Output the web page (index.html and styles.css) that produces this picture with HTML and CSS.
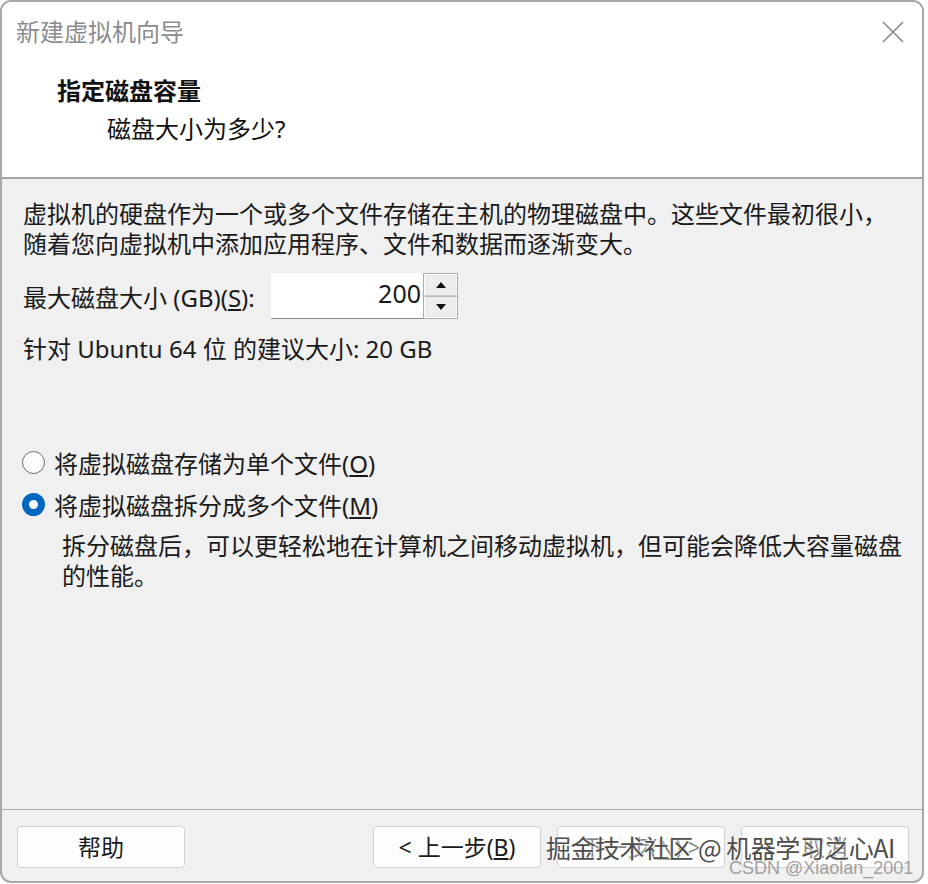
FILE: index.html
```html
<!DOCTYPE html>
<html lang="zh-CN">
<head>
<meta charset="utf-8">
<title>新建虚拟机向导</title>
<link rel="stylesheet" href="styles.css">
</head>
<body>
<div class="window">
  <div class="header">
    <div class="titlebar">
      <span class="title">新建虚拟机向导</span>
      <svg class="close" width="22" height="22" viewBox="0 0 22 22"><path d="M1 1 L21 21 M21 1 L1 21" stroke="#8a8a8a" stroke-width="1.6" fill="none"/></svg>
    </div>
    <div class="heading">指定磁盘容量</div>
    <div class="subheading">磁盘大小为多少?</div>
  </div>
  <div class="content">
    <p class="intro">虚拟机的硬盘作为一个或多个文件存储在主机的物理磁盘中。这些文件最初很小，<br>随着您向虚拟机中添加应用程序、文件和数据而逐渐变大。</p>
    <div class="size-row">
      <span class="label">最大磁盘大小 (GB)(<u>S</u>):</span>
      <div class="spin">
        <div class="spin-input">200</div>
        <div class="spin-buttons">
          <div class="spin-btn"><svg width="10" height="6" viewBox="0 0 10 6"><path d="M5 0 L10 6 L0 6 Z" fill="#111"/></svg></div>
          <div class="spin-btn"><svg width="10" height="6" viewBox="0 0 10 6"><path d="M0 0 L10 0 L5 6 Z" fill="#111"/></svg></div>
        </div>
      </div>
    </div>
    <p class="recommend">针对 Ubuntu 64 位 的建议大小: 20 GB</p>
    <div class="radio-row first">
      <span class="radio"></span>
      <span>将虚拟磁盘存储为单个文件(<u>O</u>)</span>
    </div>
    <div class="radio-row">
      <span class="radio checked"></span>
      <span>将虚拟磁盘拆分成多个文件(<u>M</u>)</span>
    </div>
    <p class="desc">拆分磁盘后，可以更轻松地在计算机之间移动虚拟机，但可能会降低大容量磁盘<br>的性能。</p>
  </div>
  <div class="footer">
    <button class="btn">帮助</button>
    <div class="spacer"></div>
    <button class="btn">&lt; 上一步(<u>B</u>)</button>
    <button class="btn faded">下一步(<u>N</u>) &gt;</button>
    <button class="btn faded">取消</button>
  </div>
  <div class="watermark">掘金技术社区 @ 机器学习之心AI</div>
  <div class="watermark2">CSDN @Xiaolan_2001</div>
</div>
</body>
</html>
```
FILE: styles.css
```css
html, body {
  margin: 0;
  padding: 0;
  background: #ffffff;
}
body {
  font-family: "Noto Sans", "Noto Sans CJK SC", sans-serif;
  color: #1a1a1a;
}
.window {
  position: relative;
  width: 924px;
  height: 883px;
  box-sizing: border-box;
  border: 2px solid #a8a8a8;
  border-radius: 11px;
  overflow: hidden;
  background: #f0f0f0;
  display: flex;
  flex-direction: column;
}
.header {
  background: #ffffff;
  height: 175px;
  flex: none;
  border-bottom: 2px solid #a3a3a3;
}
.titlebar {
  display: flex;
  justify-content: space-between;
  align-items: center;
  height: 36px;
  margin-top: 12px;
  padding-left: 14px;
  padding-right: 18px;
}
.title {
  font-size: 24px;
  line-height: 36px;
  color: #8c8c8c;
}
.close {
  display: block;
}
.heading {
  font-size: 24px;
  font-weight: bold;
  line-height: 34px;
  margin-top: 24px;
  padding-left: 55px;
  color: #111;
}
.subheading {
  font-size: 24px;
  line-height: 34px;
  margin-top: 4px;
  padding-left: 105px;
  color: #111;
}
.content {
  flex: 1;
  padding: 20px 0 0 21px;
  font-size: 24px;
}
.content p {
  margin: 0;
  line-height: 30px;
}
.intro {
  margin: 0;
}
.size-row {
  display: flex;
  align-items: center;
  height: 46px;
  margin-top: 14px;
}
.label {
  width: 248px;
  flex: none;
}
.spin {
  display: flex;
  height: 46px;
}
.spin-input {
  width: 152px;
  height: 46px;
  box-sizing: border-box;
  background: #fff;
  border-bottom: 1px solid #8a8a8a;
  text-align: right;
  padding-right: 2px;
  line-height: 40px;
  font-size: 25px;
}
.spin-buttons {
  width: 35px;
  height: 46px;
  box-sizing: border-box;
  border: 1px solid #adadad;
  display: flex;
  flex-direction: column;
  background: #ececec;
}
.spin-btn {
  flex: 1;
  display: flex;
  align-items: center;
  justify-content: center;
  border: 1px solid #fafafa;
  border-bottom-color: #c8c8c8;
}
.spin-btn + .spin-btn {
  border-top: 1px solid #b8b8b8;
  border-bottom-color: #fafafa;
}
.recommend {
  margin-top: 15px !important;
}
.radio-row {
  display: flex;
  align-items: center;
  height: 36px;
  margin-top: 6px;
  gap: 9px;
}
.radio-row.first {
  margin-top: 80px;
}
.radio {
  width: 23px;
  height: 23px;
  margin-left: -1px;
  box-sizing: border-box;
  border: 1.6px solid #6b6b6b;
  border-radius: 50%;
  background: #fdfdfd;
  flex: none;
}
.radio.checked {
  border: 7px solid #0067c0;
  background: #ffffff;
}
.desc {
  margin-top: 9px !important;
  padding-left: 39px;
}
.footer {
  flex: none;
  height: 72px;
  box-sizing: border-box;
  border-top: 1px solid #a8a8a8;
  display: flex;
  align-items: flex-start;
  padding: 16px 13px 0 15px;
  gap: 16px;
}
.spacer {
  flex: 1;
}
.btn {
  width: 168px;
  height: 42px;
  box-sizing: border-box;
  background: #fdfdfd;
  border: 1px solid #d2d2d2;
  border-radius: 4px;
  font-family: "Noto Sans", "Noto Sans CJK SC", sans-serif;
  font-size: 23px;
  color: #1a1a1a;
  padding: 0;
  line-height: 38px;
}
.btn.faded {
  color: rgba(26, 26, 26, 0.55);
}
.watermark {
  position: absolute;
  left: 544px;
  top: 826px;
  font-family: "Noto Sans CJK SC", sans-serif;
  font-size: 25px;
  line-height: 38px;
  color: #4d4d4d;
  white-space: nowrap;
  letter-spacing: -0.5px;
  text-shadow: 0 0 2px #ffffff, 0 0 2px #ffffff;
}
.watermark2 {
  position: absolute;
  left: 727px;
  top: 855px;
  font-family: "Liberation Sans", sans-serif;
  font-size: 18px;
  line-height: 22px;
  color: rgba(150, 150, 150, 0.9);
  white-space: nowrap;
}
```
